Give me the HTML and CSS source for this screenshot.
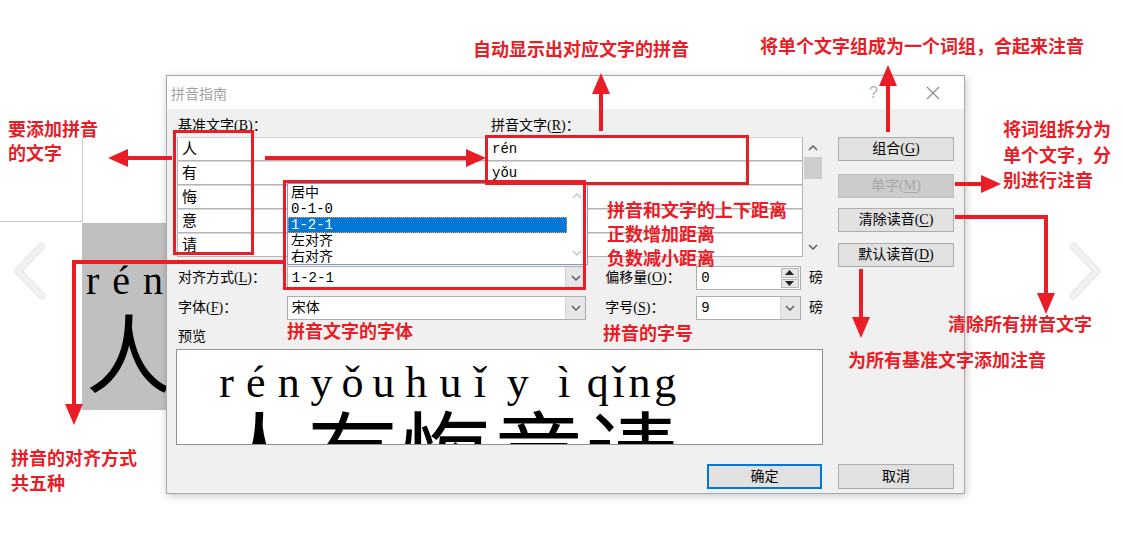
FILE: index.html
```html
<!DOCTYPE html>
<html lang="zh-CN">
<head>
  <meta charset="UTF-8" />
  <title>拼音指南</title>
  <link rel="stylesheet" href="styles.css">
</head>
<body>
<div class="page">
  <!-- document behind the dialog -->
  <div class="doc-panel"></div>
  <div class="doc-image">
    <div class="doc-pinyin"><span>r</span><span>é</span><span>n</span></div>
    <div class="doc-char">人</div>
  </div>
  <svg class="chevron chevron-left" width="34" height="56" viewBox="0 0 34 56"><polyline points="29,3 5,28 29,53"/></svg>
  <svg class="chevron chevron-right" width="34" height="56" viewBox="0 0 34 56"><polyline points="5,3 29,28 5,53"/></svg>

  <div class="dialog">
    <div class="titlebar">
      <span class="title">拼音指南</span>
      <span class="help">?</span>
      <svg class="close" width="14" height="14" viewBox="0 0 14 14"><path d="M1 1L13 13M13 1L1 13"/></svg>
    </div>

    <div class="dialog-body">
      <div class="main">
        <div class="labels">
          <span class="label-base">基准文字(<u>B</u>)：</span>
          <span>拼音文字(<u>R</u>)：</span>
        </div>

        <div class="table">
          <div class="rows">
            <div class="row"><span class="cell">人</span><span class="cell ruby">rén</span></div>
            <div class="row"><span class="cell">有</span><span class="cell ruby">yǒu</span></div>
            <div class="row"><span class="cell">悔</span><span class="cell ruby"></span></div>
            <div class="row"><span class="cell">意</span><span class="cell ruby"></span></div>
            <div class="row"><span class="cell">请</span><span class="cell ruby"></span></div>
          </div>
          <div class="vscroll">
            <svg class="scroll-arrow" width="10" height="6" viewBox="0 0 10 6"><path d="M1 5L5 1L9 5"/></svg>
            <span class="thumb"></span>
            <span class="scroll-space"></span>
            <svg class="scroll-arrow" width="10" height="6" viewBox="0 0 10 6"><path d="M1 1L5 5L9 1"/></svg>
          </div>
        </div>

        <div class="field-row">
          <span class="field-label">对齐方式(<u>L</u>)：</span>
          <div class="select wide">
            <span class="select-value">1-2-1</span>
            <span class="select-btn"><svg width="10" height="6" viewBox="0 0 10 6"><path d="M1 1L5 5L9 1"/></svg></span>
          </div>
          <span class="field-label short">偏移量(<u>O</u>)：</span>
          <div class="select narrow">
            <span class="select-value">0</span>
            <span class="spin-btns">
              <span class="spin-btn"><svg width="9" height="5" viewBox="0 0 9 5"><path d="M0 5L4.5 0L9 5Z"/></svg></span>
              <span class="spin-btn"><svg width="9" height="5" viewBox="0 0 9 5"><path d="M0 0L4.5 5L9 0Z"/></svg></span>
            </span>
          </div>
          <span class="unit">磅</span>
        </div>

        <div class="field-row second">
          <span class="field-label">字体(<u>F</u>)：</span>
          <div class="select wide">
            <span class="select-value">宋体</span>
            <span class="select-btn"><svg width="10" height="6" viewBox="0 0 10 6"><path d="M1 1L5 5L9 1"/></svg></span>
          </div>
          <span class="field-label short">字号(<u>S</u>)：</span>
          <div class="select narrow">
            <span class="select-value">9</span>
            <span class="select-btn"><svg width="10" height="6" viewBox="0 0 10 6"><path d="M1 1L5 5L9 1"/></svg></span>
          </div>
          <span class="unit">磅</span>
        </div>

        <div class="preview-label">预览</div>
        <div class="preview">
          <div class="preview-col"><div class="py"><span>r</span><span>é</span><span>n</span></div><div class="hz">人</div></div>
          <div class="preview-col"><div class="py"><span>y</span><span>ǒ</span><span>u</span></div><div class="hz">有</div></div>
          <div class="preview-col"><div class="py"><span>h</span><span>u</span><span>ǐ</span></div><div class="hz">悔</div></div>
          <div class="preview-col"><div class="py"><span>y</span><span>ì</span></div><div class="hz">意</div></div>
          <div class="preview-col"><div class="py"><span>q</span><span>ǐ</span><span>n</span><span>g</span></div><div class="hz">请</div></div>
        </div>
      </div>

      <div class="side">
        <button class="btn first">组合(<u>G</u>)</button>
        <button class="btn disabled">单字(<u>M</u>)</button>
        <button class="btn third">清除读音(<u>C</u>)</button>
        <button class="btn fourth">默认读音(<u>D</u>)</button>
      </div>

      <div class="footer">
        <button class="btn ok">确定</button>
        <button class="btn">取消</button>
      </div>
    </div>

    <!-- open list of 对齐方式 -->
    <div class="dropdown">
      <ul class="options">
        <li>居中</li>
        <li>0-1-0</li>
        <li class="selected">1-2-1</li>
        <li>左对齐</li>
        <li>右对齐</li>
      </ul>
      <div class="dropdown-scroll">
        <svg width="10" height="6" viewBox="0 0 10 6"><path d="M1 5L5 1L9 5"/></svg>
        <svg width="10" height="6" viewBox="0 0 10 6"><path d="M1 1L5 5L9 1"/></svg>
      </div>
    </div>
  </div>

  <!-- red callouts -->
  <svg class="marks" width="1123" height="535" viewBox="0 0 1123 535">
    <rect x="174.5" y="131.5" width="78" height="122"/>
    <rect x="486.5" y="136.5" width="261" height="47"/>
    <rect x="284.5" y="181.5" width="300" height="107"/>
    <path d="M172 158H126"/><polygon points="108,158 128,149 128,167"/>
    <path d="M265 158H468"/><polygon points="486,158 466,149 466,167"/>
    <path d="M601 131V92"/><polygon points="601,73 592,94 610,94"/>
    <path d="M888 132V84"/><polygon points="888,65 879,86 897,86"/>
    <path d="M955 184H983"/><polygon points="1001,184 981,175 981,193"/>
    <path d="M955 217H1046V296"/><polygon points="1046,314 1037,293 1055,293"/>
    <path d="M861 269V320"/><polygon points="861,338 852,317 870,317"/>
    <path d="M283 262H74V406"/><polygon points="74,425 65,404 83,404"/>
  </svg>

  <div class="note note-auto">自动显示出对应文字的拼音</div>
  <div class="note note-group">将单个文字组成为一个词组，合起来注音</div>
  <div class="note note-base">要添加拼音<br>的文字</div>
  <div class="note note-split">将词组拆分为<br>单个文字，分<br>别进行注音</div>
  <div class="note note-offset">拼音和文字的上下距离<br>正数增加距离<br>负数减小距离</div>
  <div class="note note-font">拼音文字的字体</div>
  <div class="note note-size">拼音的字号</div>
  <div class="note note-clear">清除所有拼音文字</div>
  <div class="note note-default">为所有基准文字添加注音</div>
  <div class="note note-align">拼音的对齐方式<br>共五种</div>
</div>
</body>
</html>
```

FILE: styles.css
```css
* {
  box-sizing: border-box;
}
body {
  margin: 0;
  background: #fff;
  color: #000;
  font-family: "Liberation Serif", "Noto Sans CJK SC", serif;
}
.page {
  position: relative;
  width: 1123px;
  height: 535px;
  overflow: hidden;
  padding: 75px 0 0 166px;
}

/* document behind */
.doc-panel {
  position: absolute;
  left: 0;
  top: 138px;
  width: 83px;
  height: 84px;
  border-right: 1px solid #c9c9c9;
  border-bottom: 1px solid #c9c9c9;
}
.doc-image {
  position: absolute;
  left: 82px;
  top: 223px;
  width: 130px;
  height: 187px;
  background: #c0c0c0;
  padding-left: 4px;
}
.doc-pinyin {
  display: flex;
  gap: 13px;
  margin-top: 36px;
  font-size: 40px;
  line-height: 44px;
  font-family: "Liberation Serif", serif;
}
.doc-char {
  font-family: "Noto Sans CJK SC", sans-serif;
  font-size: 86px;
  line-height: 86px;
  margin-top: 4px;
}
.chevron {
  position: absolute;
  top: 243px;
  filter: drop-shadow(0 0 1px #bdbdbd);
}
.chevron polyline {
  fill: none;
  stroke: #f2f2f2;
  stroke-width: 5;
  stroke-linecap: round;
  stroke-linejoin: round;
}
.chevron-left {
  left: 13px;
}
.chevron-right {
  left: 1068px;
}

/* dialog */
.dialog {
  position: relative;
  z-index: 1;
  width: 799px;
  height: 419px;
  border: 1px solid #a8a8a8;
  background: #f0f0f0;
  box-shadow: 1px 2px 8px rgba(0, 0, 0, 0.22);
  display: flex;
  flex-direction: column;
  font-size: 14px;
}
.titlebar {
  height: 33px;
  background: #fff;
  display: flex;
  align-items: center;
  padding-left: 4px;
}
.title {
  font-family: "Noto Sans CJK SC", sans-serif;
  font-size: 14px;
  color: #a2a2a2;
}
.help {
  margin-left: auto;
  color: #b0b0b0;
  font-family: "Liberation Sans", sans-serif;
  font-size: 16px;
}
.close {
  margin: 0 24px 0 48px;
}
.close path {
  stroke: #8c8c8c;
  stroke-width: 1.2;
}
.dialog-body {
  flex: 1;
  display: grid;
  grid-template-columns: 646px 116px;
  grid-template-rows: auto auto;
  column-gap: 15px;
  padding: 7px 10px 0 10px;
  line-height: 20px;
}
.main {
  display: flex;
  flex-direction: column;
}
.labels {
  display: flex;
  height: 20px;
  padding-left: 1px;
}
.label-base {
  width: 313px;
}
u {
  text-decoration-thickness: 1px;
  text-underline-offset: 2px;
}

.table {
  display: flex;
  margin-top: 1px;
  height: 120px;
}
.rows {
  width: 626px;
  display: flex;
  flex-direction: column;
}
.row {
  display: flex;
  height: 24px;
}
.cell {
  width: 310px;
  height: 24px;
  background: #fff;
  border: 1px solid #b4b4b4;
  border-top-color: #d6d6d6;
  padding-left: 4px;
  line-height: 22px;
  font-size: 15px;
}
.cell.ruby {
  width: 316px;
  border-left: 1px solid #c8c8c8;
  font-family: "Liberation Mono", monospace;
  font-size: 14px;
}
.vscroll {
  width: 20px;
  display: flex;
  flex-direction: column;
  align-items: center;
  padding-top: 8px;
}
.scroll-arrow path,
.select-btn path,
.dropdown-scroll path {
  fill: none;
  stroke: #606060;
  stroke-width: 1.5;
}
.thumb {
  width: 18px;
  height: 22px;
  margin-top: 6px;
  background: #cdcdcd;
}
.scroll-space {
  flex: 1;
}
.vscroll .scroll-arrow:last-child {
  margin-bottom: 7px;
}

.field-row {
  display: flex;
  align-items: center;
  height: 24px;
  margin-top: 9px;
}
.field-row.second {
  margin-top: 6px;
}
.field-label {
  width: 110px;
  padding-left: 1px;
}
.field-label.short {
  width: 92px;
  margin-left: 18px;
}
.select {
  height: 24px;
  display: flex;
  background: #fff;
  border: 1px solid #adadad;
}
.select.wide {
  width: 300px;
}
.select.narrow {
  width: 105px;
}
.select-value {
  flex: 1;
  padding-left: 4px;
  line-height: 22px;
  font-family: "Liberation Mono", "Noto Sans CJK SC", monospace;
  font-size: 14px;
}
.select-btn {
  width: 20px;
  background: #e6e6e6;
  border-left: 1px solid #d4d4d4;
  display: flex;
  align-items: center;
  justify-content: center;
}
.spin-btns {
  width: 20px;
  display: flex;
  flex-direction: column;
  gap: 1px;
  padding: 1px;
}
.spin-btn {
  flex: 1;
  background: #e6e6e6;
  border: 1px solid #b8b8b8;
  display: flex;
  align-items: center;
  justify-content: center;
}
.spin-btn path {
  fill: #222;
}
.unit {
  margin-left: 8px;
}
.preview-label {
  margin-top: 7px;
  height: 20px;
  padding-left: 1px;
}
.preview {
  margin: 2px 0 0 -1px;
  width: 647px;
  height: 96px;
  background: #fff;
  border: 1px solid #8f8f8f;
  overflow: hidden;
  display: flex;
  padding-left: 36px;
}
.preview-col {
  width: 93px;
  flex: none;
}
.py {
  display: flex;
  justify-content: space-around;
  align-items: baseline;
  padding-top: 11px;
  font-family: "Liberation Serif", serif;
  font-size: 44px;
  line-height: 44px;
}
.hz {
  font-family: "Noto Sans CJK SC", sans-serif;
  font-size: 91px;
  line-height: 92px;
  margin-top: -3px;
  text-align: center;
}

/* buttons */
.side {
  display: flex;
  flex-direction: column;
}
.btn {
  height: 24px;
  padding: 0;
  font: inherit;
  font-size: 14px;
  color: #000;
  background: #e1e1e1;
  border: 1px solid #adadad;
}
.btn.first {
  margin-top: 21px;
}
.btn.disabled {
  margin-top: 13px;
  background: #cccccc;
  border-color: #bfbfbf;
  color: #a8a8a8;
}
.btn.third {
  margin-top: 10px;
}
.btn.fourth {
  margin-top: 11px;
}
.footer {
  grid-column: 1 / -1;
  display: flex;
  justify-content: flex-end;
  gap: 16px;
  margin-top: 15px;
}
.footer .btn {
  width: 116px;
  height: 25px;
}
.footer .btn.ok {
  width: 115px;
  border: 2px solid #0078d7;
}

/* open dropdown */
.dropdown {
  position: absolute;
  left: 120px;
  top: 107px;
  width: 301px;
  height: 82px;
  background: #fff;
  border: 1px solid #7a9cc6;
  display: flex;
}
.options {
  list-style: none;
  margin: 0;
  padding: 1px 0 0;
  flex: 1;
}
.options li {
  height: 16px;
  line-height: 16px;
  padding-left: 3px;
  font-family: "Liberation Mono", "Noto Sans CJK SC", monospace;
  font-size: 14px;
}
.options li.selected {
  background: #0078d7;
  color: #fff;
  outline: 1px dotted #f0a050;
  outline-offset: -1px;
}
.dropdown-scroll {
  width: 20px;
  display: flex;
  flex-direction: column;
  justify-content: space-between;
  align-items: center;
  padding: 9px 0 8px;
  opacity: 0.35;
}

/* callouts */
.marks {
  position: absolute;
  left: 0;
  top: 0;
  z-index: 2;
}
.marks rect {
  fill: none;
  stroke: #ea1d27;
  stroke-width: 3;
}
.marks path {
  fill: none;
  stroke: #ea1d27;
  stroke-width: 4;
}
.marks polygon {
  fill: #ea1d27;
}
.note {
  position: absolute;
  z-index: 2;
  white-space: nowrap;
  font-family: "Noto Sans CJK SC", sans-serif;
  font-weight: 700;
  font-size: 18px;
  line-height: 24px;
  color: #ea1d27;
}
.note-auto { left: 473px; top: 36px; }
.note-group { left: 760px; top: 33px; }
.note-base { left: 8px; top: 116px; }
.note-split { left: 1003px; top: 116px; line-height: 25.5px; }
.note-offset { left: 607px; top: 197px; }
.note-font { left: 287px; top: 318px; }
.note-size { left: 603px; top: 320px; }
.note-clear { left: 948px; top: 311px; }
.note-default { left: 848px; top: 347px; }
.note-align { left: 11px; top: 445px; line-height: 25px; }
```
